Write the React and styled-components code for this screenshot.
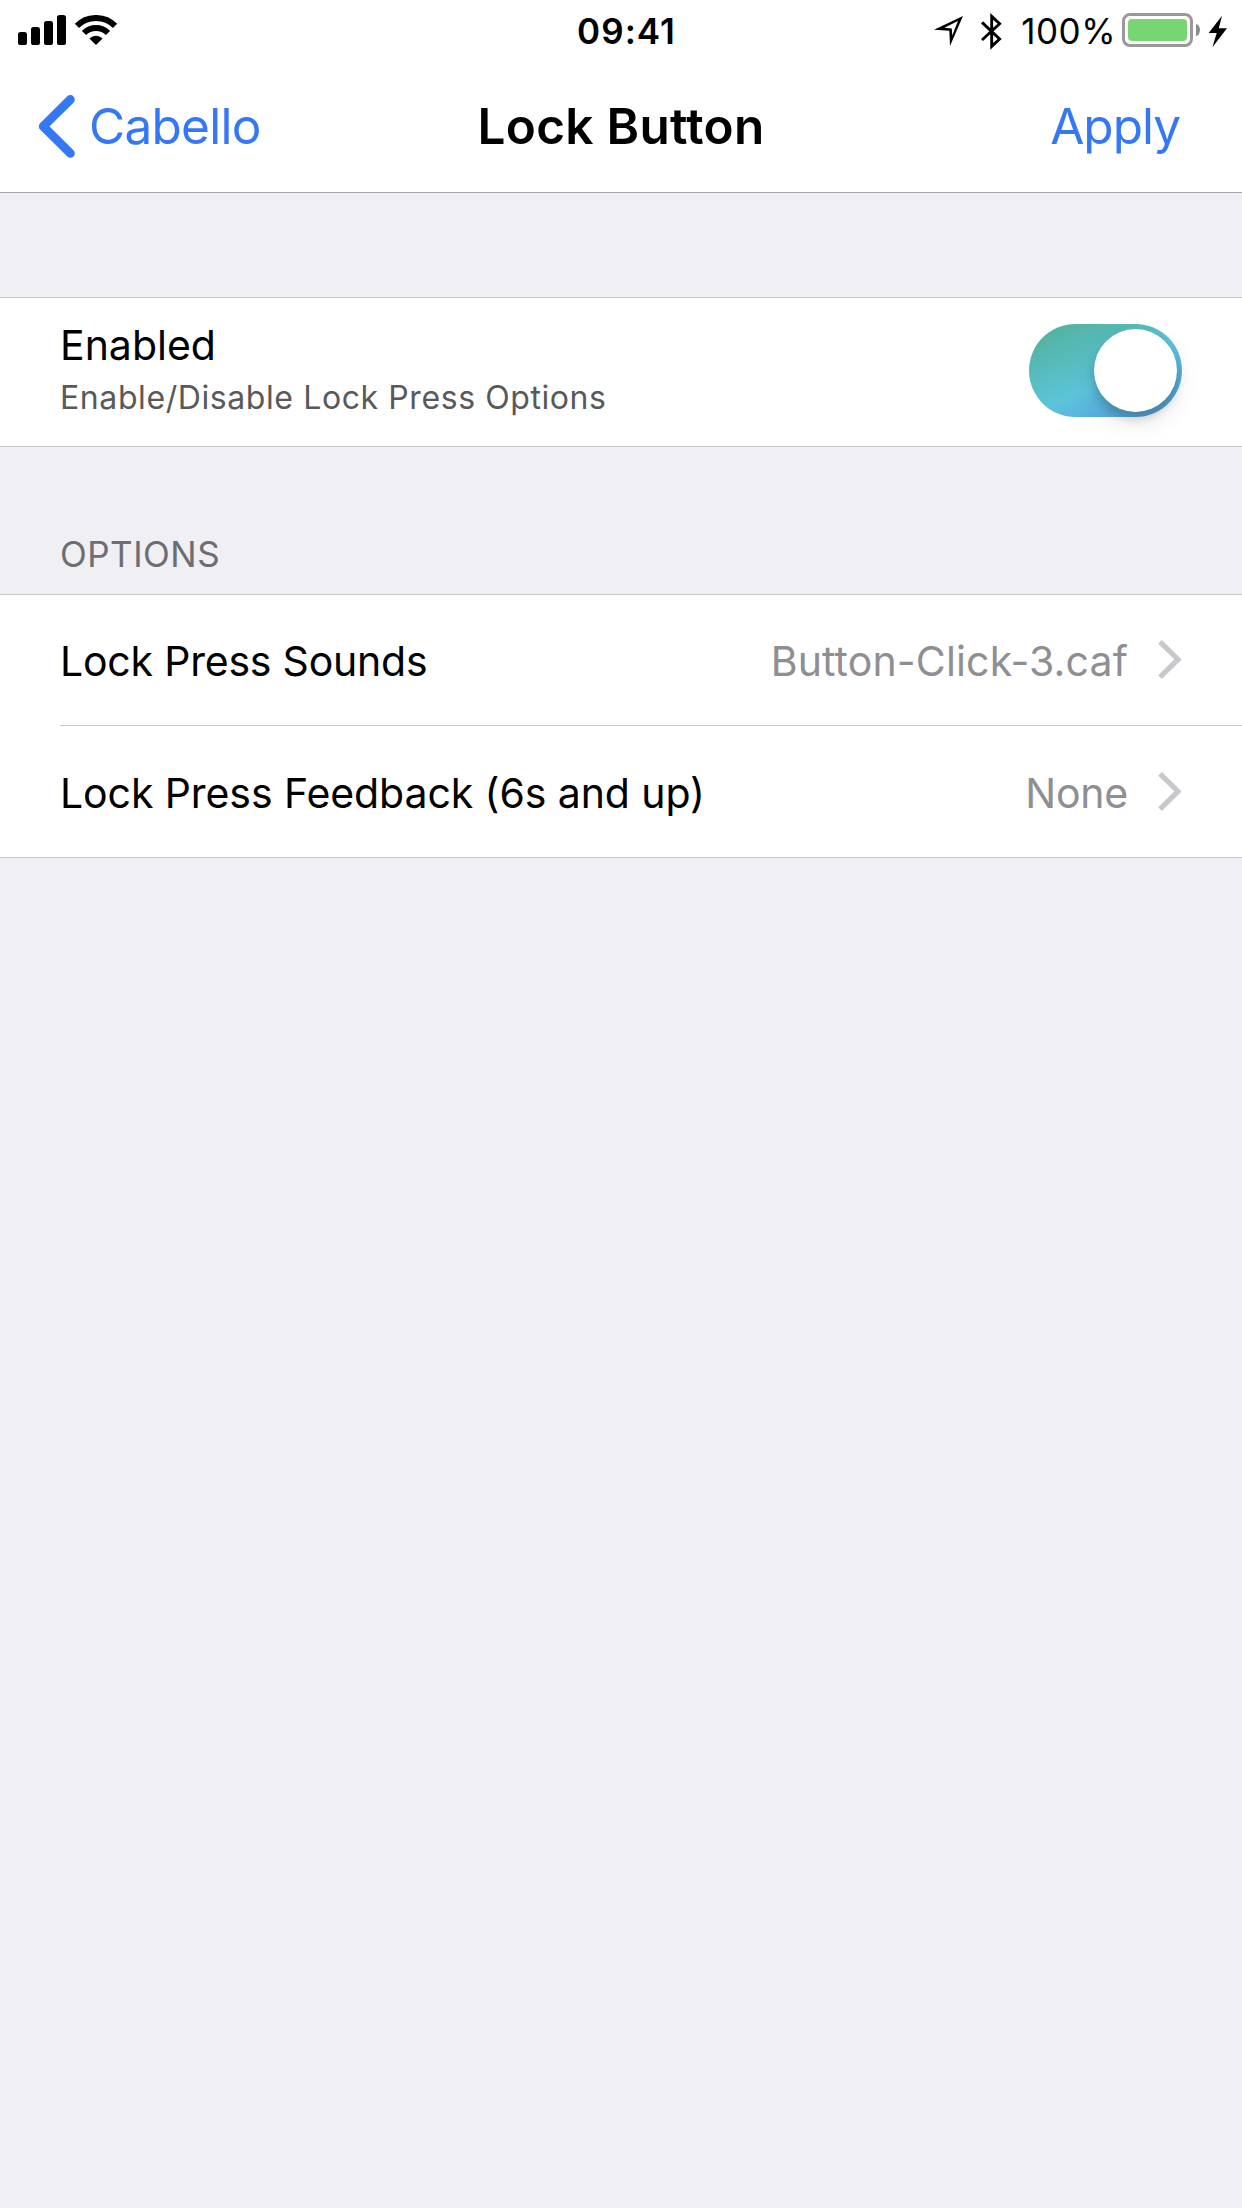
import React, { useState } from "react";
import styled, { createGlobalStyle } from "styled-components";

const GlobalStyle = createGlobalStyle`
  *, *::before, *::after { box-sizing: border-box; }
  body {
    margin: 0;
    background: #efeff4;
    font-family: Inter, "Liberation Sans", sans-serif;
    color: #000;
  }
  button {
    margin: 0;
    padding: 0;
    border: 0;
    background: none;
    font: inherit;
    cursor: pointer;
  }
  svg { display: block; flex: none; }
`;

const Screen = styled.div`
  width: 1242px;
  min-height: 2208px;
  background: #efeff4;
`;

const Text = styled.span`
  font-size: ${(p) => p.$size}px;
  font-weight: ${(p) => p.$weight || 400};
  letter-spacing: ${(p) => p.$tracking || 0}px;
  color: ${(p) => p.$color || "#000"};
  white-space: nowrap;
`;

const StatusBar = styled.div`
  display: grid;
  grid-template-columns: 1fr auto 1fr;
  align-items: center;
  height: 62px;
  background: #fff;
`;

const StatusLeft = styled.div`
  display: flex;
  padding: 0 0 2px 18px;
`;

const Clock = styled.div`
  padding-left: 11px;
`;

const StatusRight = styled.div`
  display: flex;
  align-items: center;
  justify-content: flex-end;
  padding-right: 15px;
`;

const Percent = styled.div`
  margin: 0 6px 0 19px;
`;

const Battery = styled.div`
  width: 71px;
  height: 34px;
  padding: 3px;
  margin-bottom: 2px;
  border: 3px solid #999;
  border-radius: 8px;
`;

const Charge = styled.div`
  width: 59px;
  height: 22px;
  border-radius: 4px;
  background: #77d672;
`;

const BatteryNub = styled.div`
  width: 4px;
  height: 12px;
  margin: 0 8px 2px 3px;
  border-radius: 0 4px 4px 0 / 0 6px 6px 0;
  background: #8e8e8e;
`;

const NavBar = styled.header`
  display: grid;
  grid-template-columns: 1fr auto 1fr;
  align-items: center;
  height: 131px;
  padding-bottom: 2px;
  background: #fff;
  border-bottom: 1px solid #a5a4aa;
`;

const BackButton = styled.button`
  display: flex;
  align-items: center;
  gap: 14px;
  padding-left: 38px;
`;

const ApplyButton = styled.button`
  justify-self: end;
  padding-right: 62px;
`;

const Card = styled.section`
  background: #fff;
  border-top: 1px solid #c8c7cc;
  border-bottom: 1px solid #c8c7cc;
`;

const EnabledCard = styled(Card)`
  display: flex;
  justify-content: space-between;
  height: 150px;
  margin-top: 104px;
  padding: 0 60px;
`;

const EnabledLabels = styled.div`
  display: flex;
  flex-direction: column;
  gap: 8px;
  padding-top: 22px;
`;

const Toggle = styled.button`
  display: flex;
  align-items: center;
  justify-content: ${(p) => (p.$on ? "flex-end" : "flex-start")};
  width: 153px;
  height: 93px;
  margin-top: 26px;
  padding: 0 5px;
  border-radius: 47px;
  background: ${(p) =>
    p.$on
      ? "linear-gradient(155deg, #53b3a0 10%, #5cc4da 56%, #5ab2de 72%, #529ed6 100%)"
      : "#e5e5ea"};
`;

const Knob = styled.span`
  width: 83px;
  height: 83px;
  border-radius: 50%;
  background: #fff;
  box-shadow: 0 9px 24px rgba(0, 0, 0, 0.12), 0 7px 9px rgba(0, 0, 0, 0.14);
`;

const SectionHeader = styled.h2`
  display: flex;
  align-items: flex-end;
  height: 147px;
  margin: 0;
  padding: 0 60px 19px;
`;

const OptionRow = styled.div`
  display: flex;
  align-items: center;
  height: 131px;
  margin-left: 60px;
  padding: ${(p) => (p.$last ? "3px" : "2px")} 60px 0 0;
  border-bottom: ${(p) => (p.$last ? "0" : "1px solid #c8c7cc")};
`;

const OptionValue = styled.div`
  margin-left: auto;
  margin-right: 30px;
`;

const Disclosure = styled.svg`
  margin-bottom: 4px;
`;

const SignalAndWifi = () => (
  <svg width="100" height="30" viewBox="0 0 100 30">
    <rect x="0" y="17" width="9" height="13" rx="2.6" />
    <rect x="13" y="12" width="9" height="18" rx="2.6" />
    <rect x="26" y="6" width="9" height="24" rx="2.6" />
    <rect x="39" y="0" width="9" height="30" rx="2.6" />
    <g fill="none" stroke="#000" strokeWidth="6">
      <path d="M58.9 10.9A27 27 0 0 1 97.1 10.9" />
      <path d="M66 18A17 17 0 0 1 90 18" />
    </g>
    <path d="M71.4 23.4A9.3 9.3 0 0 1 84.6 23.4L78 30Z" />
  </svg>
);

const LocationIcon = () => (
  <svg width="29" height="31" viewBox="0 0 29 31">
    <path
      fillRule="evenodd"
      d="M29 0L0 13.8L15.3 14.8L16 30ZM24 5L18.2 19.6L17.8 12.4L10.4 11.8Z"
    />
  </svg>
);

const BluetoothSvg = styled.svg`
  margin-left: 18px;
`;

const BluetoothIcon = () => (
  <BluetoothSvg width="21" height="37" viewBox="0 0 21 37">
    <path
      d="M1 9.4L18.6 26L10.7 33.4V3.4L18.6 10.8L1 27"
      fill="none"
      stroke="#000"
      strokeWidth="2.9"
    />
  </BluetoothSvg>
);

const BoltIcon = () => (
  <svg width="19" height="33" viewBox="0 0 19 33">
    <path d="M14 0.7L0.7 18H8.7L4.4 32.3L19 13.3H10.8Z" />
  </svg>
);

const BackIcon = () => (
  <svg width="37" height="63" viewBox="0 0 37 63">
    <path
      d="M32.4 4.5L5.2 31.4L32.4 58.4"
      fill="none"
      stroke="#3478f6"
      strokeWidth="8.8"
      strokeLinecap="round"
      strokeLinejoin="round"
    />
  </svg>
);

const ChevronIcon = () => (
  <Disclosure width="24" height="39" viewBox="0 0 24 39">
    <path d="M2 1.8L20 19.4L2 37.1" fill="none" stroke="#c8c7cc" strokeWidth="5.2" />
  </Disclosure>
);

const options = [
  { label: "Lock Press Sounds", labelTracking: -0.209, value: "Button-Click-3.caf", valueTracking: 0.148 },
  { label: "Lock Press Feedback (6s and up)", labelTracking: -0.089, value: "None", valueTracking: -0.233 },
];

export default function App() {
  const [enabled, setEnabled] = useState(true);
  return (
    <Screen>
      <GlobalStyle />
      <StatusBar>
        <StatusLeft>
          <SignalAndWifi />
        </StatusLeft>
        <Clock>
          <Text $size={35} $weight={600} $tracking={1.041}>09:41</Text>
        </Clock>
        <StatusRight>
          <LocationIcon />
          <BluetoothIcon />
          <Percent>
            <Text $size={35} $tracking={0.5}>100%</Text>
          </Percent>
          <Battery>
            <Charge />
          </Battery>
          <BatteryNub />
          <BoltIcon />
        </StatusRight>
      </StatusBar>
      <NavBar>
        <BackButton>
          <BackIcon />
          <Text $size={49.5} $tracking={-0.72} $color="#3478f6">Cabello</Text>
        </BackButton>
        <Text $size={49.5} $weight={600} $tracking={0.279}>Lock Button</Text>
        <ApplyButton>
          <Text $size={49.5} $tracking={-1} $color="#3478f6">Apply</Text>
        </ApplyButton>
      </NavBar>
      <EnabledCard>
        <EnabledLabels>
          <Text $size={41}>Enabled</Text>
          <Text $size={32} $tracking={0.59} $color="#59595a">Enable/Disable Lock Press Options</Text>
        </EnabledLabels>
        <Toggle
          $on={enabled}
          role="switch"
          aria-checked={enabled}
          onClick={() => setEnabled(!enabled)}
        >
          <Knob />
        </Toggle>
      </EnabledCard>
      <SectionHeader>
        <Text $size={35} $tracking={0.5} $color="#6d6d72">OPTIONS</Text>
      </SectionHeader>
      <Card>
        {options.map((o, i) => (
          <OptionRow key={o.label} $last={i === options.length - 1}>
            <Text $size={41} $tracking={o.labelTracking}>{o.label}</Text>
            <OptionValue>
              <Text $size={41} $tracking={o.valueTracking} $color="#8e8e93">{o.value}</Text>
            </OptionValue>
            <ChevronIcon />
          </OptionRow>
        ))}
      </Card>
    </Screen>
  );
}
